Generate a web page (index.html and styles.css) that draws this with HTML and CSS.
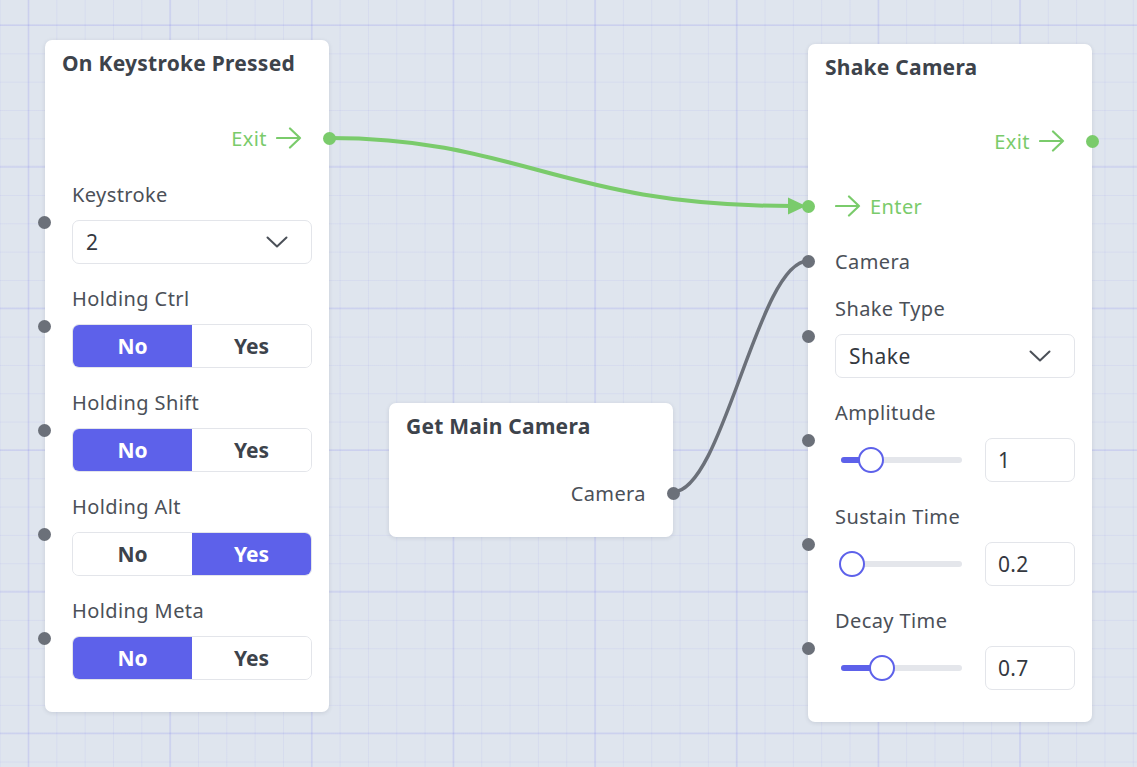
FILE: index.html
```html
<!DOCTYPE html>
<html lang="en">
<head>
<meta charset="utf-8">
<title>Node Editor</title>
<link rel="stylesheet" href="styles.css">
</head>
<body>
<div class="canvas">
  <svg class="edges" width="1137" height="767" viewBox="0 0 1137 767">
    <path class="edge-flow" d="M329 138 C 520 138, 560 206, 792 206"/>
    <polygon class="edge-arrow" points="788,197.5 806,206 788,214.5"/>
    <path class="edge-data" d="M673 492 C 723 492, 758 261, 808 261"/>
  </svg>

  <section class="node node-keystroke">
    <div class="node-title">On Keystroke Pressed</div>
    <div class="port-row out flow row-exit">
      <span>Exit</span>
      <svg class="arrow" width="26" height="22" viewBox="0 0 26 22"><path d="M1 11 H24 M14 1.5 L24 11 L14 20.5"/></svg>
      <span class="dot dot-flow"></span>
    </div>
    <div class="field first">
      <span class="dot dot-data"></span>
      <div class="field-label">Keystroke</div>
      <div class="select">
        <span>2</span>
        <svg class="chev" width="22" height="12" viewBox="0 0 22 12"><path d="M1.5 1.5 L11 10.5 L20.5 1.5"/></svg>
      </div>
    </div>
    <div class="field">
      <span class="dot dot-data"></span>
      <div class="field-label">Holding Ctrl</div>
      <div class="toggle"><span class="seg on">No</span><span class="seg">Yes</span></div>
    </div>
    <div class="field">
      <span class="dot dot-data"></span>
      <div class="field-label">Holding Shift</div>
      <div class="toggle"><span class="seg on">No</span><span class="seg">Yes</span></div>
    </div>
    <div class="field">
      <span class="dot dot-data"></span>
      <div class="field-label">Holding Alt</div>
      <div class="toggle"><span class="seg">No</span><span class="seg on">Yes</span></div>
    </div>
    <div class="field">
      <span class="dot dot-data"></span>
      <div class="field-label">Holding Meta</div>
      <div class="toggle"><span class="seg on">No</span><span class="seg">Yes</span></div>
    </div>
  </section>

  <section class="node node-camera">
    <div class="node-title">Get Main Camera</div>
    <div class="port-row out row-cam-out">
      <span>Camera</span>
      <span class="dot dot-data"></span>
    </div>
  </section>

  <section class="node node-shake">
    <div class="node-title">Shake Camera</div>
    <div class="port-row out flow row-exit2">
      <span>Exit</span>
      <svg class="arrow" width="26" height="22" viewBox="0 0 26 22"><path d="M1 11 H24 M14 1.5 L24 11 L14 20.5"/></svg>
      <span class="dot dot-flow"></span>
    </div>
    <div class="port-row in flow row-enter">
      <span class="dot dot-flow"></span>
      <svg class="arrow" width="26" height="22" viewBox="0 0 26 22"><path d="M1 11 H24 M14 1.5 L24 11 L14 20.5"/></svg>
      <span>Enter</span>
    </div>
    <div class="port-row in row-cam-in">
      <span class="dot dot-data"></span>
      <span>Camera</span>
    </div>
    <div class="field first2">
      <span class="dot dot-data"></span>
      <div class="field-label">Shake Type</div>
      <div class="select">
        <span>Shake</span>
        <svg class="chev" width="22" height="12" viewBox="0 0 22 12"><path d="M1.5 1.5 L11 10.5 L20.5 1.5"/></svg>
      </div>
    </div>
    <div class="field">
      <span class="dot dot-data"></span>
      <div class="field-label">Amplitude</div>
      <div class="slider-row">
        <div class="slider">
          <div class="track"><div class="fill" style="width:30px"></div></div>
          <div class="thumb" style="left:17px"></div>
        </div>
        <div class="num">1</div>
      </div>
    </div>
    <div class="field">
      <span class="dot dot-data"></span>
      <div class="field-label">Sustain Time</div>
      <div class="slider-row">
        <div class="slider">
          <div class="track"><div class="fill" style="width:11px"></div></div>
          <div class="thumb" style="left:-2px"></div>
        </div>
        <div class="num">0.2</div>
      </div>
    </div>
    <div class="field">
      <span class="dot dot-data"></span>
      <div class="field-label">Decay Time</div>
      <div class="slider-row">
        <div class="slider">
          <div class="track"><div class="fill" style="width:41px"></div></div>
          <div class="thumb" style="left:28px"></div>
        </div>
        <div class="num">0.7</div>
      </div>
    </div>
  </section>
</div>
</body>
</html>
```

FILE: styles.css
```css
* { box-sizing: border-box; }
html, body { margin: 0; padding: 0; }
body {
  width: 1137px;
  height: 767px;
  overflow: hidden;
  font-family: "Noto Sans", "Open Sans", sans-serif;
  background-color: #dfe5ee;
  background-image:
    linear-gradient(to right, rgba(110, 110, 235, 0.11) 2px, transparent 2px),
    linear-gradient(to bottom, rgba(110, 110, 235, 0.11) 2px, transparent 2px),
    linear-gradient(to right, rgba(110, 110, 235, 0.08) 1px, transparent 1px),
    linear-gradient(to bottom, rgba(110, 110, 235, 0.08) 1px, transparent 1px);
  background-size: 141.667px 141.667px, 141.667px 141.667px, 28.333px 28.333px, 28.333px 28.333px;
  background-position: 27.5px 0, 0 24px, 28px 0, 0 25px;
}
.canvas {
  position: relative;
  width: 1137px;
  height: 767px;
}
.edges { position: absolute; left: 0; top: 0; }
.edge-flow { fill: none; stroke: #7acb6b; stroke-width: 4; }
.edge-arrow { fill: #7acb6b; }
.edge-data { fill: none; stroke: #6b7079; stroke-width: 3.5; }

.node {
  position: absolute;
  width: 284px;
  background: #ffffff;
  border-radius: 7px;
  box-shadow: 0 1px 4px rgba(40, 50, 70, 0.13);
  display: flex;
  flex-direction: column;
  padding-bottom: 32px;
}
.node-keystroke { left: 45px; top: 40px; }
.node-camera { left: 389px; top: 403px; padding-bottom: 24px; }
.node-shake { left: 808px; top: 44px; }

.node-title {
  height: 46px;
  padding: 0 17px;
  display: flex;
  align-items: center;
  font-weight: 700;
  font-size: 21px;
  color: #3d434b;
  letter-spacing: 0.25px;
}
.port-row {
  position: relative;
  height: 40px;
  display: flex;
  align-items: center;
  gap: 9px;
  font-size: 20px;
  letter-spacing: 0.4px;
  color: #4b5058;
}
.port-row.out { justify-content: flex-end; padding-right: 27px; }
.port-row.in { padding-left: 27px; }
.port-row.flow { color: #7acb6b; }
.arrow path { fill: none; stroke: #7acb6b; stroke-width: 2.2; stroke-linecap: round; stroke-linejoin: round; }

.row-exit { margin-top: 32px; }
.row-exit2 { margin-top: 31px; }
.row-enter { margin-top: 25px; }
.row-cam-in { margin-top: 15px; }
.row-cam-out { margin-top: 24px; }

.dot {
  position: absolute;
  width: 13px;
  height: 13px;
  border-radius: 50%;
  top: 13.5px;
}
.dot-flow { background: #7acb6b; }
.dot-data { background: #6b7079; }
.out .dot { right: -6.5px; }
.in .dot { left: -6.5px; }

.field {
  position: relative;
  display: flex;
  flex-direction: column;
  gap: 13px;
  padding: 0 17px 0 27px;
  margin-top: 23px;
}
.field.first { margin-top: 25px; }
.field.first2 { margin-top: 16px; }
.field .dot { top: 32.5px; left: -7px; }
.node-shake .field .dot { left: -6.5px; }
.field-label {
  height: 24px;
  line-height: 24px;
  font-size: 20px;
  letter-spacing: 0.4px;
  color: #4b5058;
}
.select {
  height: 44px;
  border: 1px solid #e3e5ea;
  border-radius: 7px;
  display: flex;
  align-items: center;
  justify-content: space-between;
  padding: 0 23px 0 13px;
  font-size: 21px;
  letter-spacing: 0.5px;
  color: #34383f;
}
.chev path { fill: none; stroke: #4b5058; stroke-width: 2; stroke-linecap: round; stroke-linejoin: round; }

.toggle {
  height: 44px;
  display: flex;
  border: 1px solid #e3e5ea;
  border-radius: 7px;
  overflow: hidden;
}
.seg {
  flex: 1;
  display: flex;
  align-items: center;
  justify-content: center;
  font-size: 21px;
  font-weight: 700;
  color: #3d434b;
  background: #ffffff;
}
.seg.on { background: #5d61ea; color: #ffffff; }

.slider-row {
  height: 44px;
  display: flex;
  align-items: center;
  justify-content: space-between;
}
.slider {
  position: relative;
  width: 121px;
  height: 26px;
  margin-left: 6px;
  display: flex;
  align-items: center;
}
.track {
  width: 121px;
  height: 6px;
  border-radius: 3px;
  background: #e4e6eb;
  overflow: hidden;
}
.fill { height: 6px; background: #5d61ea; }
.thumb {
  position: absolute;
  top: 0;
  width: 26px;
  height: 26px;
  border-radius: 50%;
  background: #ffffff;
  border: 2.5px solid #5d61ea;
}
.num {
  width: 90px;
  height: 44px;
  border: 1px solid #e3e5ea;
  border-radius: 7px;
  display: flex;
  align-items: center;
  padding-left: 12px;
  font-size: 21px;
  letter-spacing: 0.3px;
  color: #34383f;
}
```
